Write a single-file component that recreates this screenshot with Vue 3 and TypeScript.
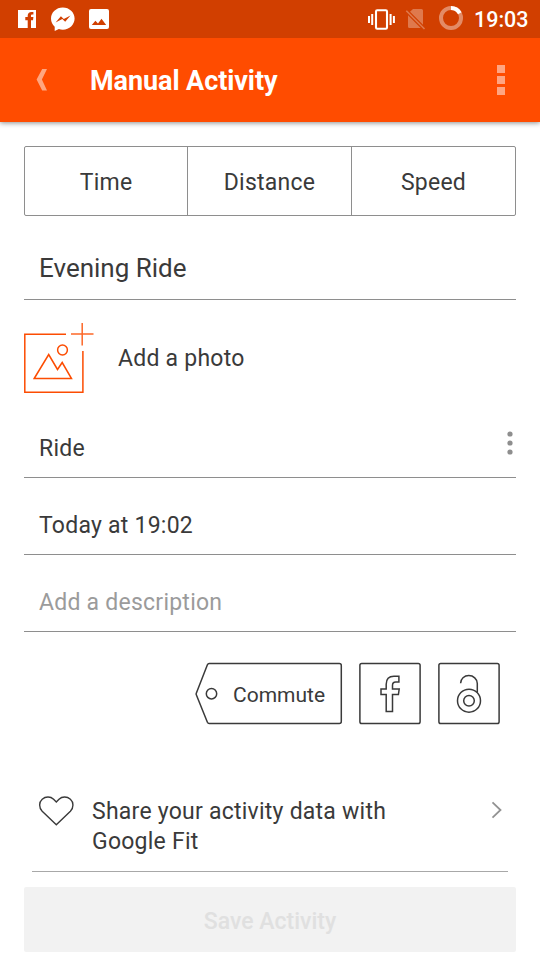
<script setup lang="ts">
const metrics: string[] = ['Time', 'Distance', 'Speed']
</script>

<template>
  <div class="screen">
    <div class="status">
      <svg class="status-left" width="120" height="38" viewBox="0 0 120 38">
        <path fill="#fff" d="M18 10h18v18h-5v-7.800h2l.4-3.200H31v-1.400c0-.9.4-1.200 1.300-1.200h1.100v-2.300h-1.800c-2.600 0-3.900 1.400-3.900 3.700V17h-2.400v3.200h2.400V28H18z" />
        <path fill="#fff" fill-rule="evenodd" d="M62.800 7.500c6.600 0 11.800 4.900 11.800 11.100S69.400 29.700 62.800 29.700c-1.400 0-2.700-.2-3.900-.6L54.700 31v-4.200C52.400 24.800 51 21.900 51 18.600 51 12.400 56.200 7.500 62.800 7.500zM55.600 22.400l6.700-3.500 2.900 2.800 5.300-6.200-6.700 3.400-2.900-2.700z" />
        <path fill="#fff" fill-rule="evenodd" d="M91 9h16a2 2 0 0 1 2 2v16a2 2 0 0 1-2 2H91a2 2 0 0 1-2-2V11a2 2 0 0 1 2-2zm.8 16h14.400l-4.700-6.200-3.500 4.600-2.600-2.700z" />
      </svg>
      <div class="status-right">
        <svg width="100" height="38" viewBox="0 0 100 38">
          <path fill="#fff" d="M1 16h2v7H1zM4.200 14h2v11h-2zM22.600 14h2v11h-2zM25.900 16h2v7h-2z" />
          <rect x="9" y="10.300" width="11" height="18.400" rx="1.200" fill="none" stroke="#fff" stroke-width="2.100" />
          <g class="faded">
            <path fill="#fff" d="M46 9h8.500A1.500 1.500 0 0 1 56 10.500v14.300L43 11.800zM41 15.300l12.700 12.700H42.500a1.500 1.500 0 0 1-1.500-1.500z" />
            <path d="M39.300 10.800l18.200 18.200" stroke="#fff" stroke-width="1.600" />
          </g>
          <circle cx="84" cy="18" r="10" fill="none" stroke="#fff" stroke-opacity=".4" stroke-width="4" />
          <path d="M84 8a10 10 0 0 1 8.800 5.300" fill="none" stroke="#fff" stroke-width="4" />
        </svg>
        <span class="clock">19:03</span>
      </div>
    </div>

    <header class="bar">
      <svg class="back" width="12" height="24" viewBox="0 0 12 24">
        <path d="M6.200 1H11L5.900 11.500 11 22.500H6.200L.6 11.500z" fill="#fff" fill-opacity=".5" />
      </svg>
      <h1>Manual Activity</h1>
      <div class="more"><i /><i /><i /></div>
    </header>

    <main>
      <div class="segments">
        <button v-for="m in metrics" :key="m">{{ m }}</button>
      </div>

      <div class="field title">Evening Ride</div>

      <div class="photo">
        <svg width="70" height="71" viewBox="0 0 70 71" fill="none" stroke="#fc4c02" stroke-width="1.500">
          <path d="M42 11.200H.8v58.100h58.100V28" />
          <path d="M47 11h22.500M58.200 0v22.500" stroke-opacity=".85" />
          <circle cx="38.500" cy="27" r="4.900" />
          <path d="M10.200 55.500L24.700 31.500 33.500 46.500 38.200 39.500 47.500 55.500z" />
        </svg>
        <span>Add a photo</span>
      </div>

      <div class="field sport">
        <span>Ride</span>
        <svg width="6" height="24" viewBox="0 0 6 24" fill="#8e8e8e">
          <circle cx="3" cy="3" r="2.600" /><circle cx="3" cy="12" r="2.600" /><circle cx="3" cy="21" r="2.600" />
        </svg>
      </div>
      <div class="field">Today at 19:02</div>
      <div class="field hint">Add a description</div>

      <div class="toggles">
        <button class="tag">
          <svg width="148" height="62" viewBox="-.8 -.5 148 62" fill="none" stroke="#3a3a3a" stroke-width="1.500">
            <path d="M14.500 1H144.500a2 2 0 0 1 2 2V59a2 2 0 0 1-2 2H14.500a2 2 0 0 1-1.900-1.200L1.500 32.300a2 2 0 0 1 0-1.500L12.600 2.200A2 2 0 0 1 14.500 1z" />
            <circle cx="16.700" cy="31.200" r="5.200" />
          </svg>
          <span>Commute</span>
        </button>
        <button class="square">
          <svg width="62" height="62" viewBox="0 -.5 62 62" fill="none" stroke="#3a3a3a" stroke-width="1.500">
            <rect x=".9" y="1" width="60.200" height="60" rx="1.800" />
            <path d="M27.200 49V32H22v-5.500h5.200v-4.700c0-5.200 2.700-8 7.700-8h5v5.700h-3.200c-2.200 0-3.200 1-3.200 3.300v3.700h6.700l-.8 5.500h-5.900v17z" />
          </svg>
        </button>
        <button class="square">
          <svg width="62" height="62" viewBox="0 -.5 62 62" fill="none" stroke="#3a3a3a" stroke-width="1.500">
            <rect x=".9" y="1" width="60.200" height="60" rx="1.800" />
            <path d="M22.600 20.800c0-4.500 3.700-7.700 8.200-7.700s8.500 3.300 8.500 8V30" />
            <circle cx="31" cy="38.200" r="11.500" /><circle cx="31" cy="38.200" r="5.300" />
          </svg>
        </button>
      </div>

      <div class="fit">
        <svg class="heart" width="36" height="31" viewBox="0 0 36 31" fill="none" stroke="#3a3a3a" stroke-width="1.400">
          <path d="M18.300 29.800L4.200 16.200C.8 12.600.8 7.200 4.200 4.200 7.600 1.200 12.500 1.300 15.600 4.200L18.300 7 21 4.200c3.100-2.900 8-3 11.400 0 3.400 3 3.400 8.400 0 12z" />
        </svg>
        <p>Share your activity data with<br />Google Fit</p>
        <svg class="chevron" width="12" height="18" viewBox="0 0 12 18">
          <path d="M1.500 1.300L9.500 9l-8 7.700" fill="none" stroke="#929292" stroke-width="1.800" />
        </svg>
      </div>

      <button class="save">Save Activity</button>
    </main>
  </div>
</template>

<style>
body {
  margin: 0;
  background: #fff;
}
</style>

<style scoped>
.screen {
  width: 540px;
  height: 960px;
  box-sizing: border-box;
  overflow: hidden;
  display: flex;
  flex-direction: column;
  background: #fff;
  color: #3a3a3a;
  font: 400 23px/30px Roboto, sans-serif;
  letter-spacing: 0.24px;
}
.screen svg {
  display: block;
  flex: none;
  overflow: visible;
}
button {
  font: inherit;
  letter-spacing: inherit;
  color: inherit;
  margin: 0;
  padding: 0;
  border: 0;
  background: none;
}
.status {
  position: relative;
  z-index: 1;
  height: 38px;
  flex: none;
  display: flex;
  justify-content: space-between;
  background: #d13f00;
  color: #fff;
}
.status-right {
  display: flex;
  width: 173px;
}
.clock {
  margin-left: 7px;
  padding-top: 5px;
  font-size: 21.500px;
  font-weight: 500;
  letter-spacing: 0;
  white-space: nowrap;
}
.faded {
  opacity: 0.3;
}
.bar {
  height: 84px;
  flex: none;
  box-sizing: border-box;
  display: flex;
  align-items: center;
  padding: 0 35px 0 36px;
  background: #ff4c00;
  color: #fff;
  box-shadow: 0 1px 5px rgba(0, 0, 0, 0.45);
}
.bar h1 {
  flex: 1;
  margin: 2px 0 0 42px;
  font-size: 27px;
  font-weight: 700;
  line-height: 32px;
  letter-spacing: -0.08px;
}
.more {
  display: flex;
  flex-direction: column;
  gap: 3px;
}
.more i {
  width: 8px;
  height: 8px;
  background: #ffa582;
}
main {
  padding: 24px 24px 8px;
}
.segments {
  height: 70px;
  box-sizing: border-box;
  display: grid;
  grid-template-columns: 162px 164px 164px;
  border: 1px solid #8e8e8e;
  border-radius: 2px;
}
.segments button {
  padding-top: 3px;
}
.segments button + button {
  border-left: 1px solid #8e8e8e;
}
.field {
  height: 77px;
  box-sizing: border-box;
  padding: 33px 0 0 15px;
  border-bottom: 1px solid #8e8e8e;
}
.field.title {
  height: 84px;
  padding-top: 37px;
  font-size: 26px;
  letter-spacing: 0;
}
.photo {
  display: flex;
  align-items: center;
  gap: 24px;
  height: 71px;
  margin-top: 23px;
}
.field.sport {
  height: 84px;
  display: flex;
  justify-content: space-between;
  padding: 40px 3px 0 15px;
}
.sport svg {
  margin-top: -3px;
}
.hint {
  color: #9b9b9b;
}
.toggles {
  display: flex;
  justify-content: flex-end;
  gap: 17px;
  margin: 30px 16px 0 0;
}
.tag {
  position: relative;
}
.tag span {
  position: absolute;
  left: 39px;
  top: 18px;
  font-size: 21px;
  letter-spacing: 0;
}
.fit {
  height: 77px;
  display: flex;
  margin: 70px 8px 0;
  padding: 0 5px 0 6px;
  border-bottom: 1px solid #a8a8a8;
}
.heart {
  margin-top: 1px;
}
.fit p {
  flex: 1;
  margin: 3px 0 0 18px;
}
.chevron {
  margin-top: 7px;
}
.save {
  display: block;
  width: 100%;
  height: 65px;
  margin-top: 15px;
  padding-top: 5px;
  border-radius: 2px;
  background: #f2f2f2;
  color: #e0e0e0;
  font-weight: 500;
  letter-spacing: 0;
}
</style>
